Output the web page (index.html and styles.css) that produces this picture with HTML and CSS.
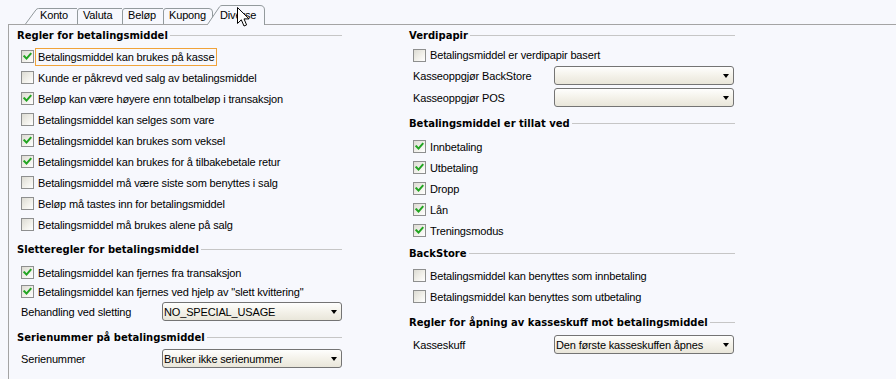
FILE: index.html
```html
<!DOCTYPE html>
<html lang="no">
<head>
<meta charset="utf-8">
<title>Diverse</title>
<link rel="stylesheet" href="styles.css">
</head>
<body>
<div class="tabs">
  <div class="tab tab-first">
    <svg class="tab-shape" width="52" height="16" viewBox="0 0 52 16"><path d="M0.5 16 L11 1.8 Q12 0.5 13.5 0.5 L52 0.5" /></svg>
    <span class="tab-text">Konto</span>
  </div>
  <div class="tab tab-valuta">
    <svg class="tab-shape" width="45" height="16" viewBox="0 0 45 16"><path d="M0.5 16 V3 Q0.5 0.5 3 0.5 H45" /></svg>
    <span class="tab-text">Valuta</span>
  </div>
  <div class="tab tab-belop">
    <svg class="tab-shape" width="41" height="16" viewBox="0 0 41 16"><path d="M0.5 16 V3 Q0.5 0.5 3 0.5 H41" /></svg>
    <span class="tab-text">Beløp</span>
  </div>
  <div class="tab tab-kupong">
    <svg class="tab-shape" width="50" height="16" viewBox="0 0 50 16"><path d="M0.5 16 V3 Q0.5 0.5 3 0.5 H46 Q49.5 0.5 49.5 4 V16" /></svg>
    <span class="tab-text">Kupong</span>
  </div>
  <div class="tab tab-selected">
    <svg class="tab-shape" width="58" height="20" viewBox="0 0 58 20"><path class="fill" d="M0.5 20 L12.5 1.8 Q13.5 0.5 15 0.5 H53 Q57.5 0.5 57.5 5 V20 Z" /><path d="M0.5 19.5 L12.5 1.8 Q13.5 0.5 15 0.5 H53 Q57.5 0.5 57.5 5 V20" /></svg>
    <span class="tab-text">Diverse</span>
  </div>
  <svg class="cursor" width="13" height="20" viewBox="0 0 13 20"><path d="M0.5 0.5 V16.5 L4.3 12.8 L7 19 L9.6 17.9 L7 11.9 L12 11.9 Z" /></svg>
</div>

<div class="pane">
  <div class="col">
    <div class="title">Regler for betalingsmiddel</div>
    <div class="list mt1">
      <div class="check"><span class="box on"><svg width="11" height="11" viewBox="0 0 11 11"><path d="M2.3 5.3 L4.5 7.6 L8.6 2.8"/></svg></span><span class="label focus">Betalingsmiddel kan brukes på kasse</span></div>
      <div class="check"><span class="box"></span><span class="label">Kunde er påkrevd ved salg av betalingsmiddel</span></div>
      <div class="check"><span class="box on"><svg width="11" height="11" viewBox="0 0 11 11"><path d="M2.3 5.3 L4.5 7.6 L8.6 2.8"/></svg></span><span class="label">Beløp kan være høyere enn totalbeløp i transaksjon</span></div>
      <div class="check"><span class="box"></span><span class="label">Betalingsmiddel kan selges som vare</span></div>
      <div class="check"><span class="box on"><svg width="11" height="11" viewBox="0 0 11 11"><path d="M2.3 5.3 L4.5 7.6 L8.6 2.8"/></svg></span><span class="label">Betalingsmiddel kan brukes som veksel</span></div>
      <div class="check"><span class="box on"><svg width="11" height="11" viewBox="0 0 11 11"><path d="M2.3 5.3 L4.5 7.6 L8.6 2.8"/></svg></span><span class="label">Betalingsmiddel kan brukes for å tilbakebetale retur</span></div>
      <div class="check"><span class="box"></span><span class="label">Betalingsmiddel må være siste som benyttes i salg</span></div>
      <div class="check"><span class="box"></span><span class="label">Beløp må tastes inn for betalingsmiddel</span></div>
      <div class="check"><span class="box"></span><span class="label">Betalingsmiddel må brukes alene på salg</span></div>
    </div>

    <div class="title mt4">Sletteregler for betalingsmiddel</div>
    <div class="list mt4">
      <div class="check short"><span class="box on"><svg width="11" height="11" viewBox="0 0 11 11"><path d="M2.3 5.3 L4.5 7.6 L8.6 2.8"/></svg></span><span class="label">Betalingsmiddel kan fjernes fra transaksjon</span></div>
      <div class="check short"><span class="box on"><svg width="11" height="11" viewBox="0 0 11 11"><path d="M2.3 5.3 L4.5 7.6 L8.6 2.8"/></svg></span><span class="label">Betalingsmiddel kan fjernes ved hjelp av "slett kvittering"</span></div>
    </div>
    <div class="field mt1">
      <span class="field-label">Behandling ved sletting</span>
      <span class="combo"><span class="combo-value">NO_SPECIAL_USAGE</span><span class="arrow"></span></span>
    </div>

    <div class="title mt6">Serienummer på betalingsmiddel</div>
    <div class="field mt2">
      <span class="field-label">Serienummer</span>
      <span class="combo"><span class="combo-value">Bruker ikke serienummer</span><span class="arrow"></span></span>
    </div>
  </div>

  <div class="col">
    <div class="title">Verdipapir</div>
    <div class="check tight"><span class="box"></span><span class="label">Betalingsmiddel er verdipapir basert</span></div>
    <div class="field mt1">
      <span class="field-label">Kasseoppgjør BackStore</span>
      <span class="combo"><span class="combo-value"></span><span class="arrow"></span></span>
    </div>
    <div class="field mt3">
      <span class="field-label">Kasseoppgjør POS</span>
      <span class="combo"><span class="combo-value"></span><span class="arrow"></span></span>
    </div>

    <div class="title mt6">Betalingsmiddel er tillat ved</div>
    <div class="list mt3">
      <div class="check"><span class="box on"><svg width="11" height="11" viewBox="0 0 11 11"><path d="M2.3 5.3 L4.5 7.6 L8.6 2.8"/></svg></span><span class="label">Innbetaling</span></div>
      <div class="check"><span class="box on"><svg width="11" height="11" viewBox="0 0 11 11"><path d="M2.3 5.3 L4.5 7.6 L8.6 2.8"/></svg></span><span class="label">Utbetaling</span></div>
      <div class="check"><span class="box on"><svg width="11" height="11" viewBox="0 0 11 11"><path d="M2.3 5.3 L4.5 7.6 L8.6 2.8"/></svg></span><span class="label">Dropp</span></div>
      <div class="check"><span class="box on"><svg width="11" height="11" viewBox="0 0 11 11"><path d="M2.3 5.3 L4.5 7.6 L8.6 2.8"/></svg></span><span class="label">Lån</span></div>
      <div class="check"><span class="box on"><svg width="11" height="11" viewBox="0 0 11 11"><path d="M2.3 5.3 L4.5 7.6 L8.6 2.8"/></svg></span><span class="label">Treningsmodus</span></div>
    </div>

    <div class="title mt2">BackStore</div>
    <div class="list mt2">
      <div class="check"><span class="box"></span><span class="label">Betalingsmiddel kan benyttes som innbetaling</span></div>
      <div class="check"><span class="box"></span><span class="label">Betalingsmiddel kan benyttes som utbetaling</span></div>
    </div>

    <div class="title mt5">Regler for åpning av kasseskuff mot betalingsmiddel</div>
    <div class="field mt3">
      <span class="field-label">Kasseskuff</span>
      <span class="combo"><span class="combo-value">Den første kasseskuffen åpnes</span><span class="arrow"></span></span>
    </div>
  </div>
</div>
</body>
</html>
```

FILE: styles.css
```css
html, body {
  margin: 0;
  padding: 0;
}

body {
  background: #f7f8fd;
  color: #000;
  font-family: "Liberation Sans", Arial, sans-serif;
  font-size: 11px;
  letter-spacing: -0.15px;
  height: 379px;
  overflow: hidden;
}

/* ---------- tabs ---------- */
.tabs {
  position: relative;
  z-index: 2;
  display: flex;
  align-items: flex-end;
  height: 24px;
  padding-left: 25px;
}

.tab {
  position: relative;
  display: flex;
  align-items: flex-end;
  height: 16px;
  box-sizing: border-box;
  padding-left: 6px;
  padding-bottom: 2px;
  line-height: 13px;
}

.tab-shape {
  position: absolute;
  left: 0;
  top: 0;
  overflow: visible;
}

.tab-shape path {
  fill: none;
  stroke: #939a9d;
  stroke-width: 1;
}

.tab-shape path.fill {
  fill: #f7f8fd;
  stroke: none;
}

.tab-text {
  position: relative;
}

.tab-first { width: 52px; padding-left: 15px; }
.tab-valuta { width: 45px; }
.tab-belop { width: 41px; }
.tab-kupong { width: 50px; }

.tab-selected {
  width: 58px;
  height: 20px;
  margin-left: -6px;
  margin-bottom: -1px;
  padding-left: 13px;
  padding-bottom: 3px;
  z-index: 1;
}

.cursor {
  position: absolute;
  left: 237px;
  top: 7px;
  z-index: 3;
}

.cursor path {
  fill: #fff;
  stroke: #000;
  stroke-width: 1;
  stroke-linejoin: miter;
}

/* ---------- pane ---------- */
.pane {
  position: relative;
  z-index: 1;
  margin-left: 8px;
  border-left: 1px solid #a4a4a4;
  border-top: 1px solid #a4a4a4;
  height: 355px;
  box-sizing: border-box;
  padding-left: 8px;
  display: grid;
  grid-template-columns: 325px 326px;
  column-gap: 67px;
  align-items: start;
}

.col {
  display: flex;
  flex-direction: column;
}

.title {
  display: flex;
  align-items: center;
  height: 20px;
  font-family: "DejaVu Sans", Verdana, sans-serif;
  font-weight: bold;
  font-size: 10px;
  letter-spacing: 0;
  white-space: nowrap;
}

.title::after {
  content: "";
  flex: 1;
  height: 1px;
  margin-left: 2px;
  background: #c6c6c6;
}

.list {
  display: flex;
  flex-direction: column;
}

.check {
  display: flex;
  align-items: center;
  height: 21px;
  padding-left: 4px;
  white-space: nowrap;
}

.check.short { height: 19px; }
.check.tight { height: 20px; }

.box {
  width: 13px;
  height: 13px;
  box-sizing: border-box;
  border: 1px solid #8e8f8f;
  background: linear-gradient(135deg, #dcdbd3 0%, #f1f0ea 55%, #ffffff 100%);
  display: flex;
  flex: none;
}

.box svg path {
  fill: none;
  stroke: #21a421;
  stroke-width: 2;
  stroke-linecap: square;
}

.label {
  margin-left: 1px;
  border: 1px solid transparent;
  padding: 1px 2px;
  line-height: 14px;
}

.label.focus {
  border-color: #f0a33a;
}

.field {
  display: flex;
  align-items: center;
  padding-left: 4px;
  white-space: nowrap;
}

.field-label {
  width: 141px;
  flex: none;
}

.combo {
  width: 180px;
  height: 19px;
  box-sizing: border-box;
  border: 1px solid #747474;
  border-radius: 3px;
  background: linear-gradient(#fefefd 0%, #f4f2ea 50%, #e9e6da 100%);
  display: flex;
  align-items: center;
  justify-content: space-between;
  padding: 0 3px 0 1px;
}

.arrow {
  width: 0;
  height: 0;
  border-left: 3.5px solid transparent;
  border-right: 3.5px solid transparent;
  border-top: 4px solid #000;
  margin-right: 1px;
}

/* spacing helpers */
.mt1 { margin-top: 1px; }
.mt2 { margin-top: 2px; }
.mt3 { margin-top: 3px; }
.mt4 { margin-top: 4px; }
.mt5 { margin-top: 5px; }
.mt6 { margin-top: 6px; }
```
